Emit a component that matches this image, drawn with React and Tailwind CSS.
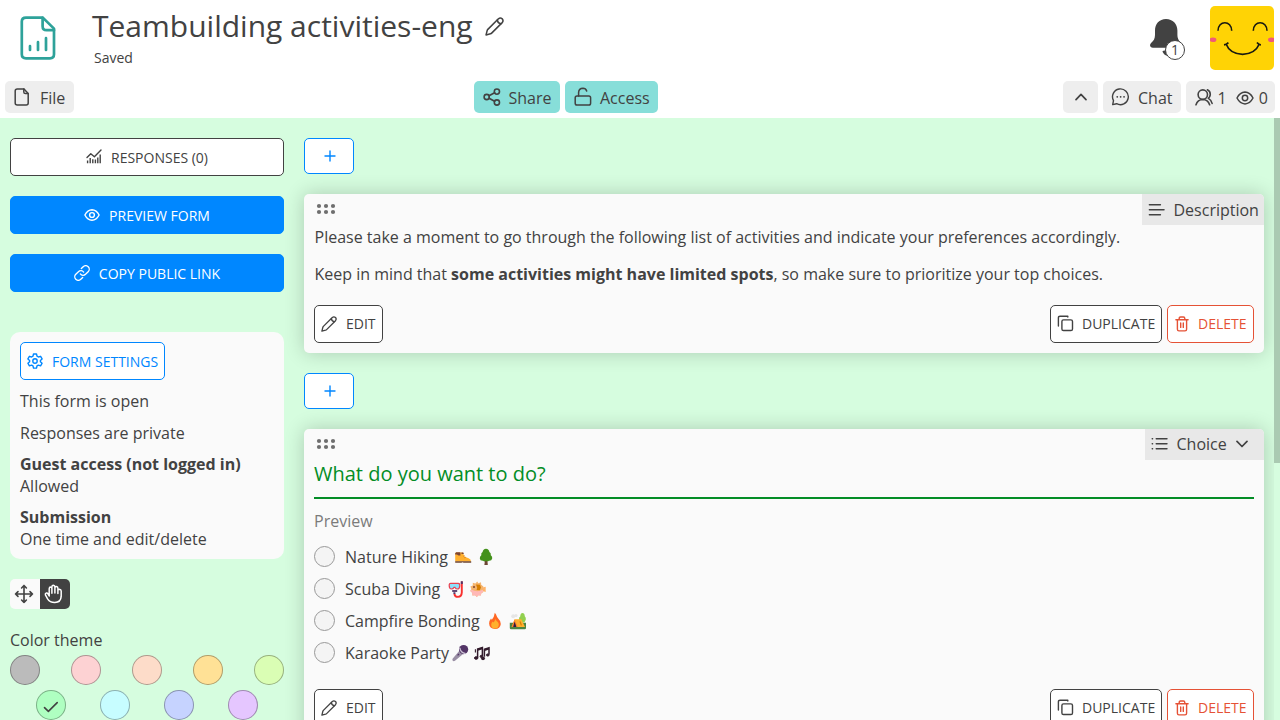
import React from "react";

function Svg({ w, h, sw = 1.5, className = "", children }) {
  return (
    <svg width={w} height={h} viewBox={`0 0 ${w} ${h}`} fill="none" stroke="currentColor" strokeWidth={sw} strokeLinecap="round" strokeLinejoin="round" className={"shrink-0 " + className}>
      {children}
    </svg>
  );
}

const FormLogo = () => (
  <Svg w={36} h={44} sw={2.7} className="text-[#2ea29a]">
    <path d="M6 1.6H22.8L34 12.6V38.2Q34 42.3 30 42.3H6Q1.8 42.3 1.8 38.2V5.6Q1.8 1.6 6 1.6Z" />
    <path d="M22.6 1.8V10.2Q22.6 14.2 26.6 14.2H34" />
    <path d="M10 30.2V34M18 26.2V34M26 22.2V34" />
  </Svg>
);

const Pencil = ({ size = 16 }) => (
  <svg width={size} height={size} viewBox="0 0 16 16" fill="none" stroke="currentColor" strokeWidth="1.3" strokeLinejoin="round" strokeLinecap="round" className="shrink-0">
    <path d="M.9 15.1 1.8 11.5Q2 10.9 2.4 10.4L11.3 1.5Q12.9.2 14.5 1.5 15.8 3.1 14.5 4.7L5.6 13.6Q5.2 14 4.6 14.2Z" />
    <path d="M10.4 2.6Q10.7 5.3 13.4 5.6" />
  </svg>
);

const FileIcon = () => (
  <Svg w={16} h={18} sw={1.5}>
    <path d="M3.3.9H10L14.2 5.4V15Q14.2 17 12.2 17H3.3Q1.2 17 1.2 15V3Q1.2.9 3.3.9Z" />
    <path d="M9.8 1V4Q9.8 5.6 11.4 5.6H14" />
  </Svg>
);

const ShareIcon = () => (
  <Svg w={18} h={18} sw={1.6}>
    <circle cx="3.7" cy="9" r="2.6" />
    <circle cx="13.9" cy="3.6" r="2.6" />
    <circle cx="13.9" cy="14.5" r="2.6" />
    <path d="M6 7.8 11.6 4.8M6 10.2 11.6 13.3" />
  </Svg>
);

const LockIcon = () => (
  <Svg w={18} h={20}>
    <rect x="1.2" y="9" width="15.4" height="9" rx="1.8" />
    <path d="M4.6 9V5.6Q4.8 1.4 9 1.3 11.7 1.4 12.7 4" />
  </Svg>
);

const ChatIcon = () => (
  <Svg w={19} h={18} sw={1.4}>
    <path d="M1.7 16.6 2.5 12.6A7.9 7.9 0 1 1 5.6 15.7Z" />
    <path d="M6.2 8.8h.1M9.6 8.8h.1M13 8.8h.1" strokeWidth="1.7" />
  </Svg>
);

const UsersIcon = () => (
  <Svg w={18} h={18} sw={1.6}>
    <circle cx="7.8" cy="6.6" r="4.7" />
    <path d="M1 16.8Q2.6 11.6 7.8 11.5 13 11.6 14.6 16.8M12.4 1.8Q15.6 3.4 15.2 7 14.8 9.2 13.4 10.4 16.2 12 17.1 15.4" />
  </Svg>
);

const EyeIcon = ({ w = 18, sw = 1.5 }) => (
  <svg width={w} height={14} viewBox="0 0 18 14" fill="none" stroke="currentColor" strokeWidth={sw} className="shrink-0">
    <path d="M1 7Q4 1.2 9 1.1 14 1.2 17 7 14 12.8 9 12.9 4 12.8 1 7Z" strokeLinejoin="round" />
    <circle cx="9" cy="7" r="2.7" />
  </svg>
);

const ChartIcon = () => (
  <Svg w={16} h={16} sw={1.2}>
    <path d="M1 8.6 4.8 4.8 8.4 7.8 15 1.1" strokeWidth="1.4" />
    <path d="M1.6 11.4V14.2M4.2 9V14.2M6.8 10.2V14.2M9.4 10.6V14.2M11.8 8.4V14.2M14.2 5.6V14.2" strokeWidth="1.4" strokeLinecap="butt" />
  </Svg>
);

const LinkIcon = () => (
  <svg width="16" height="16" viewBox="0 0 24 24" fill="none" stroke="currentColor" strokeWidth="2" strokeLinecap="round" strokeLinejoin="round" className="shrink-0">
    <path d="M9.5 13.4a5.2 5.2 0 0 0 7.8.6l4-4a5.3 5.3 0 0 0-7.5-7.5L11 5.2" />
    <path d="M14.5 10.6a5.2 5.2 0 0 0-7.8-.6l-4 4a5.3 5.3 0 0 0 7.5 7.5L13 18.8" />
  </svg>
);

const GearIcon = () => (
  <Svg w={16} h={16} sw={1.4}>
    <path d="M6.5 1H9.5L10 3.2 11.4 4 13.6 3.3 15.1 5.9 13.4 7.4V8.7L15.1 10.2 13.6 12.8 11.4 12.1 10 12.9 9.5 15.1H6.5L6 12.9 4.6 12.1 2.4 12.8.9 10.2 2.6 8.7V7.4L.9 5.9 2.4 3.3 4.6 4 6 3.2Z" />
    <circle cx="8" cy="8" r="2.2" />
  </Svg>
);

const CopyIcon = () => (
  <Svg w={17} h={17} sw={1.4}>
    <rect x="4.9" y="4.9" width="10.6" height="10.6" rx="1.6" />
    <path d="M1.4 11V2.8Q1.4 1.2 3 1.2H10.8V2" />
  </Svg>
);

const TrashIcon = () => (
  <Svg w={14} h={16} sw={1.4}>
    <path d="M.9 3.8H13.1M4.2 3.6V2.4Q4.2 1 5.6 1H8.4Q9.8 1 9.8 2.4V3.6M2.4 4V13.3Q2.4 14.9 4 14.9H10Q11.6 14.9 11.6 13.3V4M5.7 7V11.4M8.3 7V11.4" />
  </Svg>
);

const MoveIcon = () => (
  <Svg w={20} h={20} sw={1.6}>
    <path d="M10 1.5V18.5M1.5 10H18.5M7.6 4 10 1.5 12.4 4M7.6 16 10 18.5 12.4 16M4 7.6 1.5 10 4 12.4M16 7.6 18.5 10 16 12.4" />
  </Svg>
);

const HandIcon = () => (
  <Svg w={20} h={20} sw={1.5}>
    <path d="M5.2 12V4.7Q5.3 3.1 6.5 3.1 7.8 3.2 7.9 4.7V9.2V2.9Q8 1.3 9.4 1.3 10.9 1.4 10.9 2.9V9V3.8Q11.1 2.5 12.4 2.6 13.9 2.8 13.9 4.2V9.6V6.4Q14.2 5.2 15.3 5.2 17.1 5.4 17.2 7V12.4Q16.8 18.4 10.8 18.5 5.7 18.4 3.6 14.9L1.4 10.9Q1 9.5 2.1 9.1 3.3 8.8 4 9.8Z" />
  </Svg>
);

const Bell = () => (
  <svg width="32" height="40" viewBox="0 0 32 40" fill="currentColor" className="text-[#424242]">
    <path d="M16 1C9.2 1 5 6 5 12.5V17C5 21 3.4 22.8 1.3 24.8Q-.8 27 .6 28.8 1.4 29.8 3 29.8H29.6Q31.4 29 31.5 27 31.4 25.3 30 23.8C28.4 22 27.4 20 27.4 17V12.5C27.4 6 22.8 1 16 1Z" />
    <path d="M12.4 33.4Q13.6 31.8 18 33V38Q14.2 37.4 12.4 33.4Z" />
  </svg>
);

const Avatar = () => (
  <svg width="64" height="64" viewBox="0 0 64 64" fill="none" stroke="#191a12" className="rounded-[5px] bg-[#ffd305]">
    <path d="M8 24.8C8 14 21.7 14 21.7 24.8M43.3 24.8C43.3 14 57 14 57 24.8" strokeWidth="1.6" />
    <path d="M15.8 37.5Q20 48.2 32.6 48.3 45 48.2 49.6 37.5M14 38.9Q16.4 38.6 18.4 36.6M47 36.6Q48.6 38.8 51 39" strokeWidth="1.7" />
    <ellipse cx="3" cy="33.7" rx="3.4" ry="2.3" fill="#f05a78" stroke="none" />
    <ellipse cx="61.4" cy="33.7" rx="3.4" ry="2.3" fill="#f05a78" stroke="none" />
  </svg>
);

function Pic({ label, className = "", children }) {
  return (
    <svg width="18" height="18" viewBox="0 0 18 18" role="img" aria-label={label} className={"shrink-0 " + className}>
      {children}
    </svg>
  );
}

const Boot = () => (
  <Pic label="Boot" className="ml-1.5">
    <path d="M1.2 13.6V5.8Q1.2 4.4 2.6 4.4H9L10.2 8.4 14.6 10.2Q17 11 17 13.6Z" fill="#ffb02e" />
    <path d="M2.2 4.2H6.4V7.6H4.4L3 6.6H1.2V5.2Z" fill="#7d4533" />
    <path d="M7.4 4.4H9.4L9.8 6H7.6Z" fill="#7d4533" />
    <path d="M1.2 13.2H17.2V14.8H9.6L8.6 14.2 7.4 14.8H1.2Z" fill="#6d4534" />
    <path d="M9 8.2 11 7.8M10 9.8 12 9.2" stroke="#e08a1a" strokeWidth=".8" />
  </Pic>
);

const Tree = () => (
  <Pic label="Tree" className="ml-[5px]">
    <path d="M8 11H10.2L10.8 17H7.4Z" fill="#6d4534" />
    <path d="M9 .8Q12 1 12.4 4 14.2 5 13.8 7.2 15.6 8.4 15.2 10.6 14.6 13 12 12.8 10.2 14 9 12.8 7.6 14 6 12.8 3 13 2.8 10.4 2.6 8.4 4.3 7.2 3.8 5 5.6 4 6 1 9 .8Z" fill="#44911b" />
  </Pic>
);

const Mask = () => (
  <Pic label="Diving mask" className="ml-[7px]">
    <path d="M14.8 1.6V12.4Q14.6 16.8 11 16.9 7.8 16.8 7.4 13.8" fill="none" stroke="#f8312f" strokeWidth="1.9" />
    <path d="M14.8 1.2V4M7.4 12.2V14" stroke="#533566" strokeWidth="2" />
    <path d="M3.6 3.4H11.2Q13 3.6 12.8 5.6 12.6 9 10.4 9 8.8 9 8 7.4H7Q6 9 4.6 9 2.2 8.8 2.2 5.4 2.2 3.4 3.6 3.4Z" fill="#8be0fb" stroke="#e94150" strokeWidth="1.2" />
    <path d="M5.2 11H10.2" stroke="#533566" strokeWidth="1.8" />
  </Pic>
);

const Fish = () => (
  <Pic label="Blowfish" className="ml-1">
    <path d="M12 7.8 16.7 6.8V12L12 10.6Z" fill="#ffb367" />
    <path d="M8.2 1.4 9.4 3.2 12 2.2 12.2 4.8 14.4 6.4 13.8 9 14.4 12 12.4 13.2 11.8 15.6 9.4 15.2 7.8 17 6.2 15.2 3.4 15.4 3.2 12.8 1.2 11 2.4 9 1.4 6.4 3.8 5.4 3.8 2.8 6.4 3.4Z" fill="#f4b46e" />
    <path d="M2.2 9.6Q8 12.6 13.8 9.8L14.2 12 12.2 13.2 11.8 15.6 9.4 15.2 7.8 17 6.2 15.2 3.4 15.4 3.2 12.8 1.4 11Z" fill="#ffb8b7" />
    <path d="M7 4.6 11 4.8 12 7.4 10.8 10.2 7.6 10 8.2 7.8Z" fill="#d67d00" />
    <circle cx="5" cy="7" r="1" fill="#7d4533" />
  </Pic>
);

const Fire = () => (
  <Pic label="Fire" className="ml-1.5">
    <path d="M8.8.8C11 3 10.2 4.4 12.2 6.4Q15 9 14.8 12 14.2 17 9 17.1 3.4 16.8 3.1 11.6 3.1 8.8 5 6.6L5.8 7.8Q8.2 5.4 8.8.8Z" fill="#ff6723" />
    <path d="M9.2 6.8C9.8 9 12.8 9.8 12.8 12.6Q12.6 16.4 9 16.6 5.2 16.4 5.2 12.8 5.3 10.6 6.8 9.6L7.4 10.6Q9 9.4 9.2 6.8Z" fill="#ffb02e" />
  </Pic>
);

const Camp = () => (
  <Pic label="Camping" className="ml-[5px]">
    <path d="M.8 10.8H17V16Q17 17.2 15.8 17.2H2Q.8 17.2.8 16Z" fill="#4c8442" />
    <path d="M10 7.4Q9.8 5.4 11.2 4.6 11.4 1 13.4 1 15.6 1 15.8 4.2 17.2 5.4 16.8 7.8L15.4 10.4H10.6Z" fill="#92d04f" />
    <circle cx="4.2" cy="4.2" r="2" fill="#e6e6e6" /><circle cx="7" cy="3.6" r="1.6" fill="#e6e6e6" />
    <path d="M5.6 7.2H12.4L16 15H2.6Z" fill="#ffb02e" />
    <path d="M5.6 7.2 8.8 15H2.6Z" fill="#ff822d" />
    <path d="M5.6 9.4 7.4 15H4.2Z" fill="#321b41" />
    <path d="M11 9.4 12.4 13.4" stroke="#d67d00" strokeWidth="1.2" />
  </Pic>
);

const Mic = () => (
  <Pic label="Microphone" className="ml-0.5">
    <path d="M9.4 5.6 13 9.2 4 16.8Q2.6 17.6 1.6 16.6 1 15.6 1.8 14.6Z" fill="#998ea4" />
    <circle cx="12.6" cy="5.6" r="4.6" fill="#533566" />
    <path d="M8.8 3.8Q9.4 8.4 14.6 9.7" fill="none" stroke="#cdc4d6" strokeWidth="1.3" />
    <path d="M6.6 11.4 8 10" stroke="#533566" strokeWidth="1.2" />
  </Pic>
);

const Notes = () => (
  <Pic label="Musical notes" className="ml-1">
    <g fill="#321b2c" stroke="#321b2c">
      <path d="M4.6 13.8V5L9.4 3.6V12" fill="none" strokeWidth="1.5" />
      <path d="M4.6 5.8 9.4 4.4" strokeWidth="2" />
      <path d="M11.4 12.8V5.2L16 3.8V10.6" fill="none" strokeWidth="1.5" />
      <path d="M11.4 6 16 4.6" strokeWidth="2" />
      <ellipse cx="3.2" cy="14" rx="1.7" ry="1.3" /><ellipse cx="8.4" cy="12.4" rx="1.3" ry="1.1" />
      <ellipse cx="10" cy="14.4" rx="1.6" ry="1.3" /><ellipse cx="14.8" cy="11" rx="1.3" ry="1.1" />
      <path d="M2.4 5.2V8.4" strokeWidth="1.1" />
    </g>
  </Pic>
);

function Tool({ className, icon, label }) {
  return (
    <button className={"flex h-8 items-center rounded-[5px] text-base leading-none " + className}>
      {icon}
      <span className="pt-0.5">{label}</span>
    </button>
  );
}

function SideButton({ filled, icon, label }) {
  return (
    <button className={"flex h-[38px] w-full items-center justify-center gap-2 rounded-[5px] border text-sm " + (filled ? "border-[#0087ff] bg-[#0087ff] text-white" : "border-[#424242] bg-white text-[#424242]")}>
      {icon}
      <span className="pl-px pt-px">{label}</span>
    </button>
  );
}

function AddButton() {
  return (
    <button className="flex h-9 w-[50px] items-center justify-center rounded-[5px] border border-[#0087ff] bg-white text-[#0087ff]">
      <Svg w={12} h={12} sw={1.4} className="ml-px"><path d="M6 1V11M1 6H11" /></Svg>
    </button>
  );
}

function Dots() {
  return (
    <svg width="20" height="12" viewBox="0 0 20 12" fill="#6e6e6e">
      {[3, 10, 17].map((x) => [3, 9].map((y) => <circle key={`${x}-${y}`} cx={x} cy={y} r="2.1" />))}
    </svg>
  );
}

function Actions() {
  return (
    <div className="flex h-[38px] gap-[5px] text-sm">
      <button className="flex w-[69px] items-center gap-2 rounded-[5px] border border-[#424242] bg-white pl-1.5"><Pencil /><span className="pl-px">EDIT</span></button>
      <button className="ml-auto flex w-[112px] items-center gap-2 rounded-[5px] border border-[#424242] bg-white pl-1.5"><CopyIcon />DUPLICATE</button>
      <button className="flex w-[87px] items-center gap-[9px] rounded-[5px] border border-[#e55236] bg-white pl-[7px] text-[#e55236]"><TrashIcon />DELETE</button>
    </div>
  );
}

const options = [
  { text: "Nature Hiking", pics: [Boot, Tree] },
  { text: "Scuba Diving", pics: [Mask, Fish] },
  { text: "Campfire Bonding", pics: [Fire, Camp] },
  { text: "Karaoke Party", pics: [Mic, Notes] },
];

const swatch = "flex size-[30px] items-center justify-center rounded-full border border-black/30 ";

export default function App() {
  return (
    <div className="flex h-[720px] w-[1280px] flex-col overflow-hidden bg-white text-[#424242] [font-family:'Open_Sans',sans-serif]">
      <header className="flex h-[76px] shrink-0 items-start">
        <div className="ml-5 mt-4"><FormLogo /></div>
        <div className="ml-9 pt-[5px]">
          <div className="flex items-center gap-3">
            <h1 className="text-[30px] leading-[42px]">Teambuilding activities-eng</h1>
            <Pencil size={19} />
          </div>
          <div className="ml-0.5 pt-px text-sm leading-5">Saved</div>
        </div>
        <div className="relative ml-auto mt-[18px]">
          <Bell />
          <span className="absolute left-[15px] top-[22px] flex size-5 items-center justify-center rounded-full border border-[#424242] bg-white text-sm">1</span>
        </div>
        <div className="ml-7 mr-1.5 mt-1.5"><Avatar /></div>
      </header>

      <nav className="flex h-[42px] shrink-0 items-start px-[5px] pt-[5px]">
        <Tool className="w-[69px] gap-2.5 bg-[#eee] pl-[9px]" icon={<FileIcon />} label="File" />
        <Tool className="ml-[399.5px] w-[86.5px] gap-2 bg-[#87ded9] pl-[9px]" icon={<ShareIcon />} label="Share" />
        <Tool className="ml-[5px] w-[92.5px] gap-2 bg-[#87ded9] pl-[9px]" icon={<LockIcon />} label="Access" />
        <button className="ml-auto flex h-8 w-[35px] items-center justify-center rounded-[5px] bg-[#eee]"><Svg w={12} h={8} sw={1.7}><path d="M1 6.6 6 1.4 11 6.6" /></Svg></button>
        <Tool className="ml-[5px] w-[77.5px] gap-2 bg-[#eee] pl-2" icon={<ChatIcon />} label="Chat" />
        <div className="ml-[5px] flex h-8 w-[89.5px] items-center rounded-[5px] bg-[#eee] pl-[9px] leading-none">
          <UsersIcon /><span className="ml-[5px] pt-0.5">1</span>
          <span className="ml-[9px] pt-0.5"><EyeIcon /></span><span className="ml-[5px] pt-0.5">0</span>
        </div>
      </nav>

      <div className="flex min-h-0 flex-1 bg-[#d6fddf]">
        <aside className="w-[284px] shrink-0 pl-2.5 pt-5">
          <div className="flex flex-col gap-5">
            <SideButton icon={<ChartIcon />} label="RESPONSES (0)" />
            <SideButton filled icon={<EyeIcon w={16} sw={1.6} />} label="PREVIEW FORM" />
            <SideButton filled icon={<LinkIcon />} label="COPY PUBLIC LINK" />
          </div>
          <section className="mt-10 h-[227px] rounded-[10px] bg-[#fafafa] p-2.5 leading-[21.6px]">
            <button className="flex h-[38px] w-[145px] items-center gap-2 rounded-[5px] border border-[#0087ff] bg-white pl-1.5 text-sm text-[#0087ff]"><GearIcon /><span className="pl-px pt-px">FORM SETTINGS</span></button>
            <p className="mt-[11px]">This form is open</p>
            <p className="mt-2.5">Responses are private</p>
            <p className="mt-2.5"><b>Guest access (not logged in)</b><br />Allowed</p>
            <p className="mt-2.5"><b>Submission</b><br />One time and edit/delete</p>
          </section>
          <div className="mt-5 flex h-[30px] w-[60px] overflow-hidden rounded-[5px]">
            <div className="flex w-[30px] items-center justify-center bg-[#fafafa] pr-[3px]"><MoveIcon /></div>
            <div className="flex w-[30px] items-center justify-center bg-[#424242] pr-[3px] text-white"><HandIcon /></div>
          </div>
          <div className="mt-[21px] leading-[21px]">Color theme</div>
          <div className="mt-1 flex justify-between">
            <i className={swatch + "bg-[#bbbbbb]"} />
            <i className={swatch + "bg-[#fdd2d3]"} />
            <i className={swatch + "bg-[#fddcc9]"} />
            <i className={swatch + "bg-[#ffe196]"} />
            <i className={swatch + "bg-[#dafeb4]"} />
          </div>
          <div className="mt-[5px] flex gap-[34px] pl-[26px]">
            <i className={swatch + "bg-[#afffc1]"}><Svg w={16} h={12} sw={1.6} className="mt-1"><path d="M1.5 6.6 5.4 10.4 14.2 1.6" /></Svg></i>
            <i className={swatch + "bg-[#c7fdff]"} />
            <i className={swatch + "bg-[#c6d3ff]"} />
            <i className={swatch + "bg-[#e5c6ff]"} />
          </div>
        </aside>

        <main className="h-full w-[990px] shrink-0 overflow-hidden pl-5 pr-2.5 pt-5">
          <AddButton />
          <article className="mt-5 h-[158.6px] rounded-[5px] bg-[#fafafa] shadow-[0_0_20px_rgba(0,0,0,0.2)]">
            <div className="flex h-[31px] items-start justify-between pl-3">
              <div className="pt-[9px]"><Dots /></div>
              <div className="flex h-[31px] w-[122.5px] items-center gap-2 rounded-tr-[5px] bg-[#e8e8e8] pl-1.5">
                <Svg w={18} h={14} sw={1.5}><path d="M1.4 1.8H12.4M1.4 6.8H16M1.4 11.8H12.4" /></Svg>Description
              </div>
            </div>
            <div className="px-2.5 leading-[23px]">
              <p className="pl-[0.5px] pt-px">Please take a moment to go through the following list of activities and indicate your preferences accordingly.</p>
              <p className="mt-[13.5px] pl-[0.5px]">Keep in mind that <b>some activities might have limited spots</b>, so make sure to prioritize your top choices.</p>
              <div className="mt-[19px]"><Actions /></div>
            </div>
          </article>
          <div className="mt-[20.4px]"><AddButton /></div>
          <article className="mt-5 h-[400px] rounded-[5px] bg-[#fafafa] shadow-[0_0_20px_rgba(0,0,0,0.2)]">
            <div className="flex h-[31px] items-start justify-between pl-3">
              <div className="pt-[9px]"><Dots /></div>
              <div className="flex h-[31px] w-[119.5px] items-center gap-[9px] rounded-tr-[5px] bg-[#e8e8e8] pl-1.5">
                <Svg w={17} h={14} sw={1.4}><path d="M5.2 1.8H16M5.2 6.8H16M5.2 11.8H16M1.2 1.8h.4M1.2 6.8h.4M1.2 11.8h.4" /></Svg>Choice
                <Svg w={12} h={8} sw={1.7}><path d="M1 1.4 6 6.5 11 1.4" /></Svg>
              </div>
            </div>
            <div className="px-2.5">
              <h2 className="h-[39px] border-b-2 border-[#038d26] text-xl leading-[28px] text-[#038d26]">What do you want to do?</h2>
              <p className="mt-[11px] leading-[22px] text-[#7b7b7b]">Preview</p>
              <ul className="mt-[9px]">
                {options.map(({ text, pics }) => (
                  <li key={text} className="flex h-8 items-center">
                    <span className="mr-2.5 size-[21px] rounded-full border border-[#999] bg-[#f4f4f4]" />
                    <span className="leading-8">{text}</span>
                    {pics.map((P, i) => <P key={i} />)}
                  </li>
                ))}
              </ul>
              <div className="mt-5"><Actions /></div>
            </div>
          </article>
        </main>
        <div className="w-1.5 shrink-0"><div className="h-[345px] bg-[#aacab2]" /></div>
      </div>
    </div>
  );
}
